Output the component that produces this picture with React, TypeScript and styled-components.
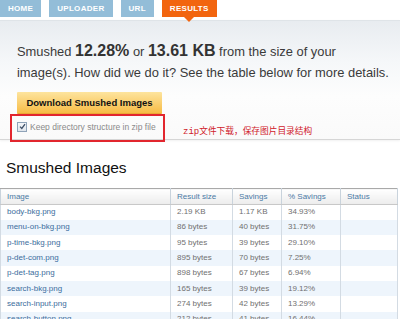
import React from "react";
import styled, { createGlobalStyle, css } from "styled-components";

const Global = createGlobalStyle`
  html, body { margin: 0; padding: 0; background: #fff; }
  body {
    width: 400px;
    height: 319px;
    overflow: hidden;
    font-family: "Liberation Sans", Arial, sans-serif;
  }
`;

const Page = styled.div`
  width: 400px;
`;

const TabBar = styled.nav`
  display: flex;
  gap: 8px;
  height: 17px;
`;

const Tab = styled.div<{ $active?: boolean }>`
  position: relative;
  padding: 0 8px;
  height: 17px;
  line-height: 17px;
  font-size: 8px;
  font-weight: bold;
  letter-spacing: 0.3px;
  color: #fff;
  background: ${(p) => (p.$active ? "#f2650f" : "#93bdd8")};
  ${(p) =>
    p.$active &&
    css`
      &::after {
        content: "";
        position: absolute;
        left: 50%;
        top: 17px;
        margin-left: -5px;
        border-left: 5px solid transparent;
        border-right: 5px solid transparent;
        border-top: 5px solid #f2650f;
      }
    `}
`;

const Summary = styled.section`
  margin-top: 3px;
  border-top: 1px solid #dfe4e8;
  border-bottom: 1px solid #d6d6d6;
  box-shadow: 0 1px 2px rgba(0, 0, 0, 0.06);
  background: linear-gradient(#e8ecf0 0, #f5f7f9 40px, #fdfdfd 75px, #fafafa 100%);
  padding: 19px 0 0 17px;
`;

const Lead = styled.p`
  margin: 0;
  padding-right: 4px;
  font-size: 12.9px;
  line-height: 21px;
  color: #3a3a3a;
`;

const Figure = styled.strong`
  font-size: 16px;
  font-weight: bold;
  color: #333;
`;

const DownloadButton = styled.button`
  display: block;
  margin-top: 9px;
  width: 145px;
  height: 22px;
  padding: 0;
  border: 0;
  border-bottom: 1px solid #eaa835;
  border-radius: 1px;
  background: linear-gradient(#fde49e, #f7bc46);
  font: bold 9.5px "Liberation Sans", Arial, sans-serif;
  color: #111;
`;

const OptionRow = styled.div`
  display: flex;
  align-items: center;
  gap: 18px;
  margin-left: -7px;
  margin-bottom: -3px;
`;

const Annotated = styled.label`
  display: flex;
  align-items: center;
  gap: 3px;
  width: 155px;
  height: 28px;
  box-sizing: border-box;
  border: 2px solid #e2262e;
  padding: 0 0 3px 5px;
  font-size: 8.5px;
  color: #8a8a8a;
`;

const CheckBox = styled.span`
  display: inline-flex;
  align-items: center;
  justify-content: center;
  width: 8px;
  height: 8px;
  border: 1px solid #8fa3b8;
  background: linear-gradient(#f4f6f9, #dfe5ec);
`;

const Note = styled.span`
  padding-top: 5px;
  font-size: 8.7px;
  color: #d0202a;
  font-family: "Noto Sans CJK SC", "Liberation Sans", sans-serif;
`;

const Code = styled.span`
  font-family: "Liberation Mono", monospace;
  font-size: 9px;
`;

const Heading = styled.h2`
  margin: 19px 0 0 6px;
  font: normal 15.5px/18px "Liberation Sans", Arial, sans-serif;
  color: #111;
`;

const Table = styled.table`
  margin-top: 11px;
  width: 397px;
  border-collapse: collapse;
  table-layout: fixed;
  font-size: 8px;
`;

const Th = styled.th`
  height: 15px;
  padding: 0 0 0 6px;
  text-align: left;
  font-weight: normal;
  color: #4b7aa5;
  background: linear-gradient(#ffffff, #ececec);
  border-top: 1px solid #a9a9a9;
  border-bottom: 1px solid #c8c8c8;
  border-left: 1px solid #c9d3dc;
  border-right: 1px solid #c9d3dc;
`;

const Tr = styled.tr<{ $alt: boolean }>`
  height: 15.3px;
  background: ${(p) => (p.$alt ? "#eef5fc" : "#fff")};
`;

const Td = styled.td<{ $link?: boolean }>`
  padding: 0 0 0 6px;
  line-height: 1;
  color: ${(p) => (p.$link ? "#3c6d9c" : "#707070")};
  border-left: 1px solid #d3dbe3;
  border-right: 1px solid #d3dbe3;
  white-space: nowrap;
  overflow: hidden;
`;

const rows = [
  ["body-bkg.png", "2.19 KB", "1.17 KB", "34.93%"],
  ["menu-on-bkg.png", "86 bytes", "40 bytes", "31.75%"],
  ["p-time-bkg.png", "95 bytes", "39 bytes", "29.10%"],
  ["p-det-com.png", "895 bytes", "70 bytes", "7.25%"],
  ["p-det-tag.png", "898 bytes", "67 bytes", "6.94%"],
  ["search-bkg.png", "165 bytes", "39 bytes", "19.12%"],
  ["search-input.png", "274 bytes", "42 bytes", "13.29%"],
  ["search-button.png", "212 bytes", "41 bytes", "16.44%"],
];

export default function App() {
  return (
    <Page>
      <Global />
      <TabBar>
        <Tab>HOME</Tab>
        <Tab>UPLOADER</Tab>
        <Tab>URL</Tab>
        <Tab $active>RESULTS</Tab>
      </TabBar>
      <Summary>
        <Lead>
          Smushed <Figure>12.28%</Figure> or <Figure>13.61 KB</Figure> from the size of your
          <br />
          image(s). How did we do it? See the table below for more details.
        </Lead>
        <DownloadButton>Download Smushed Images</DownloadButton>
        <OptionRow>
          <Annotated>
            <CheckBox>
              <svg width="7" height="7" viewBox="0 0 7 7">
                <path d="M1 3.6 L2.8 5.4 L6 1.2" fill="none" stroke="#3e4f66" strokeWidth="1.3" />
              </svg>
            </CheckBox>
            Keep directory structure in zip file
          </Annotated>
          <Note>
            <Code>zip</Code>文件下载，保存图片目录结构
          </Note>
        </OptionRow>
      </Summary>
      <Heading>Smushed Images</Heading>
      <Table>
        <colgroup>
          <col style={{ width: 170 }} />
          <col style={{ width: 62 }} />
          <col style={{ width: 49 }} />
          <col style={{ width: 59 }} />
          <col style={{ width: 57 }} />
        </colgroup>
        <thead>
          <tr>
            <Th>Image</Th>
            <Th>Result size</Th>
            <Th>Savings</Th>
            <Th>% Savings</Th>
            <Th>Status</Th>
          </tr>
        </thead>
        <tbody>
          {rows.map((r, i) => (
            <Tr key={r[0]} $alt={i % 2 === 1}>
              <Td $link>{r[0]}</Td>
              <Td>{r[1]}</Td>
              <Td>{r[2]}</Td>
              <Td>{r[3]}</Td>
              <Td />
            </Tr>
          ))}
        </tbody>
      </Table>
    </Page>
  );
}
